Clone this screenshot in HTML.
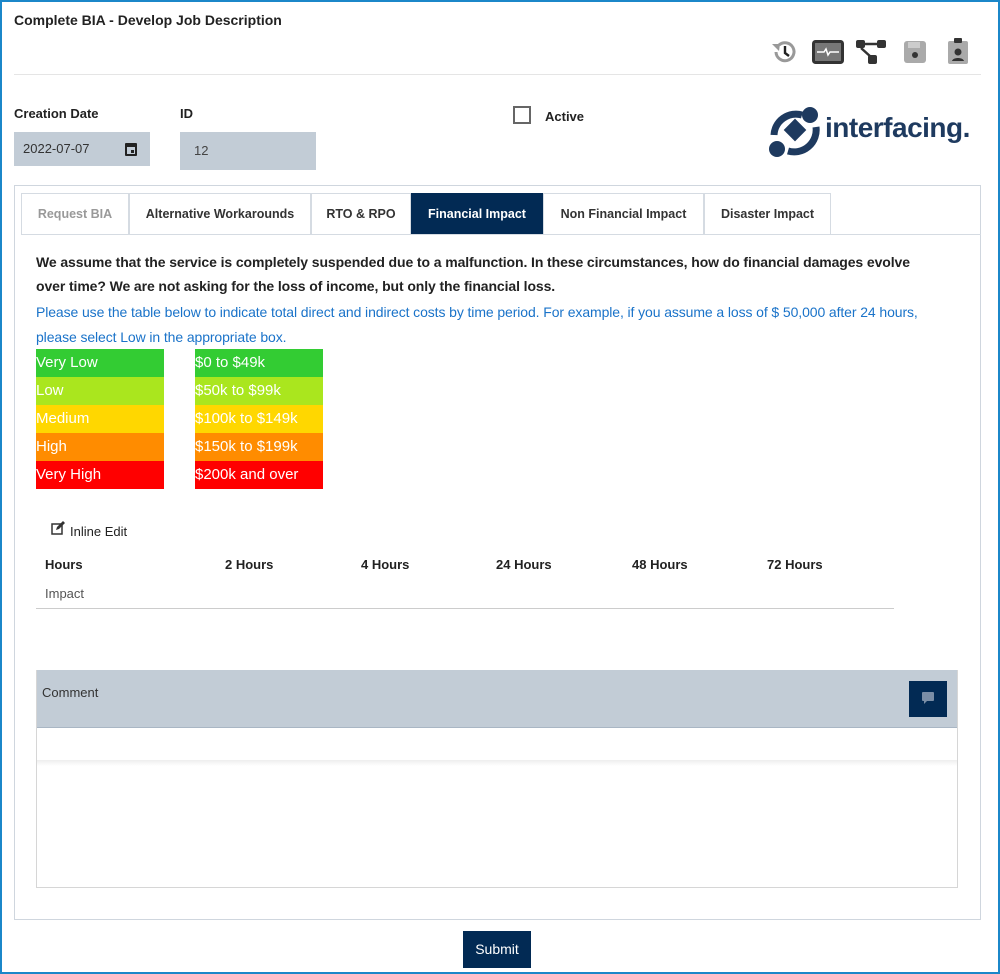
<!DOCTYPE html>
<html><head><meta charset="utf-8"><style>
*{box-sizing:border-box}
body{margin:0;width:1000px;height:974px;overflow:hidden;font-family:"Liberation Sans",Arial,sans-serif;background:#fff}
.frame{position:absolute;left:0;top:0;width:1000px;height:974px;border:2px solid #1b87c9}
.abs{position:absolute}
.b{font-weight:bold}
.tab{position:absolute;top:193px;height:41px;border:1px solid #d5dbe2;border-bottom:none;font-size:12.5px;font-weight:bold;color:#333;display:flex;align-items:center;justify-content:center;background:#fff}
.lg{position:absolute;height:28px;color:#fff;font-size:15px;line-height:28px;width:128px}
.th{position:absolute;top:557px;font-size:13px;font-weight:bold;color:#222}
</style></head><body>
<div class="frame"></div>
<div class="abs b" style="left:14px;top:12px;font-size:14px;color:#222">Complete BIA - Develop Job Description</div>
<svg class="abs" style="left:770px;top:38px" width="30" height="28" viewBox="0 0 30 28"><path d="M6 14a9 9 0 1 0 3-7" fill="none" stroke="#999" stroke-width="3"/><path d="M2 6l8 0-1 7z" fill="#999"/><path d="M15 8v7l4 3" stroke="#222" stroke-width="2.4" fill="none"/></svg>
<svg class="abs" style="left:812px;top:40px" width="32" height="24"><rect x="1.5" y="1.5" width="29" height="21" rx="2" fill="#777" stroke="#333" stroke-width="3"/><path d="M5 12h7l2-3 2 6 2-3h9" stroke="#fff" stroke-width="1.5" fill="none"/></svg>
<svg class="abs" style="left:855px;top:39px" width="32" height="26"><rect x="1" y="1" width="9" height="8" rx="2" fill="#333"/><rect x="22" y="1" width="9" height="8" rx="2" fill="#333"/><rect x="13" y="16" width="9" height="9" rx="2" fill="#333"/><path d="M10 5h12M6 9l10 9" stroke="#333" stroke-width="2.5"/></svg>
<svg class="abs" style="left:903px;top:40px" width="24" height="24"><rect x="1" y="1" width="22" height="22" rx="3" fill="#aaa"/><rect x="5" y="2" width="12" height="6" fill="#ccc"/><circle cx="12" cy="15" r="3" fill="#333"/></svg>
<svg class="abs" style="left:947px;top:37px" width="22" height="28"><rect x="1" y="4" width="20" height="23" rx="2" fill="#aaa"/><rect x="7" y="1" width="8" height="5" rx="1" fill="#333"/><circle cx="11" cy="15" r="3.5" fill="#333"/><path d="M5 24c1-4 11-4 12 0z" fill="#333"/></svg>
<div class="abs" style="left:14px;top:74px;width:967px;height:1px;background:#e5e5e5"></div>
<div class="abs b" style="left:14px;top:106px;font-size:13px;color:#222">Creation Date</div>
<div class="abs b" style="left:180px;top:106px;font-size:13px;color:#222">ID</div>
<div class="abs" style="left:14px;top:132px;width:136px;height:34px;background:#c2ccd6;font-size:13px;color:#333;padding:9px 0 0 9px">2022-07-07</div>
<svg class="abs" style="left:124px;top:141px" width="14" height="16"><rect x="1" y="2" width="12" height="13" rx="1" fill="#222"/><rect x="3" y="6" width="8" height="7" fill="#c2ccd6"/><rect x="7" y="9" width="3" height="3" fill="#222"/></svg>
<div class="abs" style="left:180px;top:132px;width:136px;height:38px;background:#c2ccd6;font-size:13px;color:#444;padding:11px 0 0 14px">12</div>
<div class="abs" style="left:513px;top:106px;width:18px;height:18px;border:2px solid #666"></div>
<div class="abs b" style="left:545px;top:109px;font-size:13px;color:#222">Active</div>
<svg class="abs" style="left:766px;top:105px" width="60" height="55" viewBox="0 0 60 55"><circle cx="44" cy="10" r="8" fill="#1e3a5f"/><circle cx="11" cy="44" r="8" fill="#1e3a5f"/><path d="M8 30a22 22 0 0 1 28-20" stroke="#1e3a5f" stroke-width="7" fill="none"/><path d="M50 22a22 22 0 0 1-28 24" stroke="#1e3a5f" stroke-width="7" fill="none"/><rect x="21" y="17" width="16" height="16" transform="rotate(45 29 25)" fill="#1e3a5f"/></svg>
<div class="abs b" style="left:825px;top:112px;font-size:28px;color:#1e3a5f;letter-spacing:-0.5px">interfacing.</div>
<div class="abs" style="left:14px;top:185px;width:967px;height:735px;border:1px solid #cfd6de"></div>
<div class="abs" style="left:21px;top:234px;width:960px;height:1px;background:#d5dbe2"></div>
<div class="tab" style="left:21px;width:108px;color:#999">Request BIA</div>
<div class="tab" style="left:129px;width:182px">Alternative Workarounds</div>
<div class="tab" style="left:311px;width:100px">RTO &amp; RPO</div>
<div class="tab" style="left:411px;width:132px;background:#022a54;color:#fff;border-color:#022a54">Financial Impact</div>
<div class="tab" style="left:543px;width:161px">Non Financial Impact</div>
<div class="tab" style="left:704px;width:127px">Disaster Impact</div>
<div class="abs b" style="left:36px;top:250px;width:925px;font-size:14px;line-height:24px;color:#222;letter-spacing:-0.1px">We assume that the service is completely suspended due to a malfunction. In these circumstances, how do financial damages evolve<br>over time? We are not asking for the loss of income, but only the financial loss.</div>
<div class="abs" style="left:36px;top:300px;width:920px;font-size:14px;line-height:25px;color:#1a73c9;letter-spacing:-0.1px">Please use the table below to indicate total direct and indirect costs by time period. For example, if you assume a loss of $ 50,000 after 24 hours, please select Low in the appropriate box.</div>
<div class="lg" style="left:36px;top:349px;background:#33cc33">Very Low</div><div class="lg" style="left:195px;top:349px;background:#33cc33">$0 to $49k</div>
<div class="lg" style="left:36px;top:377px;background:#aae61e">Low</div><div class="lg" style="left:195px;top:377px;background:#aae61e">$50k to $99k</div>
<div class="lg" style="left:36px;top:405px;background:#ffd700">Medium</div><div class="lg" style="left:195px;top:405px;background:#ffd700">$100k to $149k</div>
<div class="lg" style="left:36px;top:433px;background:#ff8c00">High</div><div class="lg" style="left:195px;top:433px;background:#ff8c00">$150k to $199k</div>
<div class="lg" style="left:36px;top:461px;background:#ff0000">Very High</div><div class="lg" style="left:195px;top:461px;background:#ff0000">$200k and over</div>
<svg class="abs" style="left:51px;top:521px" width="14" height="14"><rect x="1" y="3" width="10" height="10" fill="none" stroke="#333" stroke-width="1.5"/><path d="M5 9l1-3 6-6 2 2-6 6z" fill="#333"/></svg>
<div class="abs" style="left:70px;top:524px;font-size:13px;color:#222">Inline Edit</div>
<div class="th" style="left:45px">Hours</div><div class="th" style="left:225px">2 Hours</div><div class="th" style="left:361px">4 Hours</div><div class="th" style="left:496px">24 Hours</div><div class="th" style="left:632px">48 Hours</div><div class="th" style="left:767px">72 Hours</div>
<div class="abs" style="left:45px;top:586px;font-size:13px;color:#555">Impact</div>
<div class="abs" style="left:36px;top:608px;width:858px;height:1px;background:#ccc"></div>
<div class="abs" style="left:36px;top:670px;width:922px;height:218px;border:1px solid #d6d6d6"></div>
<div class="abs" style="left:37px;top:670px;width:920px;height:58px;background:#c2ccd6;border-bottom:1px solid #a9b6c4"></div>
<div class="abs" style="left:42px;top:685px;font-size:13px;color:#333">Comment</div>
<div class="abs" style="left:909px;top:681px;width:38px;height:36px;background:#022a54"></div>
<svg class="abs" style="left:921px;top:691px" width="14" height="14"><rect x="1" y="1" width="12" height="9" rx="1" fill="#7b8ea6"/><path d="M3 10v3l3-3z" fill="#7b8ea6"/></svg>
<div class="abs" style="left:37px;top:760px;width:920px;height:6px;background:linear-gradient(#eee,#fff)"></div>
<div class="abs" style="left:463px;top:931px;width:68px;height:37px;background:#022a54;color:#fff;font-size:14px;text-align:center;line-height:37px">Submit</div>
</body></html>
